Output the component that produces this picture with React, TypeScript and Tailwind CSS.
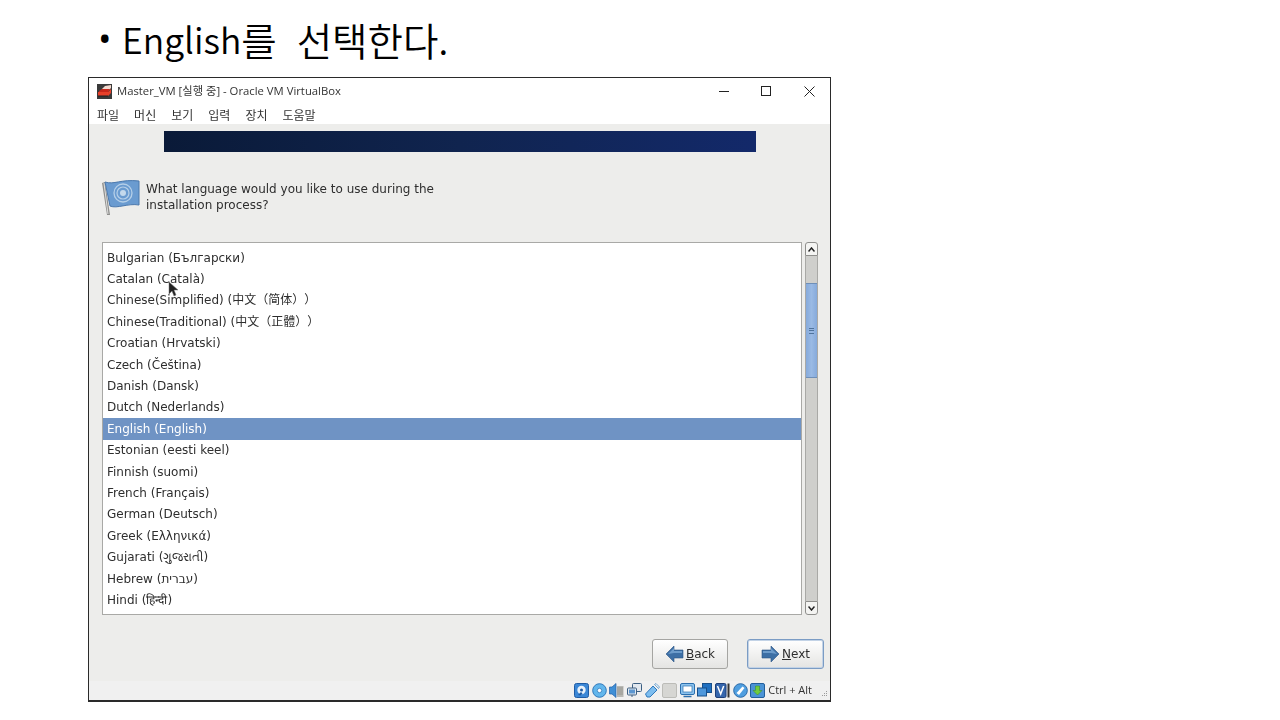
const languages = [
  'Bulgarian (Български)',
  'Catalan (Català)',
  'Chinese(Simplified) (中文（简体））',
  'Chinese(Traditional) (中文（正體））',
  'Croatian (Hrvatski)',
  'Czech (Čeština)',
  'Danish (Dansk)',
  'Dutch (Nederlands)',
  'English (English)',
  'Estonian (eesti keel)',
  'Finnish (suomi)',
  'French (Français)',
  'German (Deutsch)',
  'Greek (Ελληνικά)',
  'Gujarati (ગુજરાતી)',
  'Hebrew (עברית)',
  'Hindi (हिन्दी)',
]

const menus = ['파일', '머신', '보기', '입력', '장치', '도움말']

function VboxLogo() {
  return (
    <svg width="15" height="15" viewBox="0 0 15 15" aria-hidden="true">
      <rect width="15" height="15" fill="#3a3a3a" />
      <path d="M5 5l3-3 6-1v3l-3 3z" fill="#f3d9cf" />
      <path d="M2 7l3-2h8l-2 3H2z" fill="#c9261a" />
      <path d="M1 8h10l3-3v4l-3 3H1z" fill="#e8402a" />
      <path d="M1 12h10" stroke="#1f1f1f" strokeWidth="1" />
    </svg>
  )
}

function FlagIcon() {
  return (
    <svg width="38" height="37" viewBox="0 0 38 37" aria-hidden="true">
      <path d="M0 4l3-1 5 33-3 0z" fill="#8f8f8d" />
      <path d="M1.500 4l1 0 4 31-1 0z" fill="#e0e0de" />
      <path d="M3 3c9 3 16-3 34-1l0 24c-11-2-22 4-29 1z" fill="#6a9bd0" stroke="#4a78ad" />
      <circle cx="21" cy="14" r="9" fill="none" stroke="#b5cfe8" strokeWidth="1.300" />
      <circle cx="21" cy="14" r="6" fill="none" stroke="#b5cfe8" strokeWidth="1.200" />
      <circle cx="21" cy="14" r="3" fill="#c4d9ec" />
    </svg>
  )
}

function ArrowIcon({ left }: { left?: boolean }) {
  return (
    <svg width="19" height="18" viewBox="0 0 19 18" aria-hidden="true">
      <path
        d={left ? 'M1 9l8-8v4h9v8H9v4z' : 'M18 9l-8-8v4H1v8h9v4z'}
        fill="#3d6fa5"
        stroke="#2c5484"
        strokeWidth="0.600"
      />
      <path d={left ? 'M3 9l6-6v3h8v2H9z' : 'M16 9l-6-6v3H2v2h8z'} fill="#6d9ccb" />
    </svg>
  )
}

function StatusIcons() {
  return (
    <div className="flex items-center gap-[2.600px]">
      {/* hard disk */}
      <svg width="15" height="15" viewBox="0 0 15 15" aria-hidden="true">
        <rect x="0.500" y="0.500" width="14" height="14" rx="2" fill="#3b87d6" stroke="#1f5ca5" />
        <circle cx="7.500" cy="7" r="4.200" fill="#e8f1fa" />
        <circle cx="7.500" cy="7" r="1.500" fill="#1f5ca5" />
        <path d="M4 12l3-3 1.500 1.500-2 2z" fill="#1f5ca5" />
      </svg>
      {/* optical disc */}
      <svg width="15" height="15" viewBox="0 0 15 15" aria-hidden="true">
        <circle cx="7.500" cy="7.500" r="6.800" fill="#62b6ec" stroke="#2f78bb" />
        <circle cx="7.500" cy="7.500" r="2.200" fill="#fff" stroke="#2f78bb" strokeWidth="0.800" />
      </svg>
      {/* audio */}
      <svg width="15" height="15" viewBox="0 0 15 15" aria-hidden="true">
        <path d="M0.500 4h2.500l4-3.500v14l-4-3.500H0.500z" fill="#3f8fd6" stroke="#1f5ca5" strokeWidth="0.700" />
        <path d="M8 3h6.500v11H8z" fill="#b9b9b5" />
        <path d="M8 5h6M8 7h6M8 9h6M8 11h6" stroke="#87877f" strokeWidth="0.700" />
      </svg>
      {/* network */}
      <svg width="15" height="15" viewBox="0 0 15 15" aria-hidden="true">
        <rect x="5.500" y="0.500" width="9" height="8" rx="1" fill="#e2e8ef" stroke="#3c5f82" />
        <rect x="0.500" y="5" width="9" height="7" rx="1" fill="#e2e8ef" stroke="#3c5f82" />
        <rect x="2" y="6.500" width="6" height="4" fill="#5d97d1" />
        <path d="M5 12v2" stroke="#3c5f82" />
      </svg>
      {/* usb */}
      <svg width="15" height="15" viewBox="0 0 15 15" aria-hidden="true">
        <path d="M0.500 11l7.500-8 4 4-7 7H2z" fill="#7cbdf0" stroke="#2f78bb" />
        <path d="M9.500 1.500l1.500-1 3.500 3.500-1 1.500z" fill="#e5eef6" stroke="#2f78bb" strokeWidth="0.600" />
      </svg>
      {/* shared folders, inactive */}
      <svg width="15" height="15" viewBox="0 0 15 15" aria-hidden="true">
        <rect x="0.500" y="0.500" width="14" height="14" rx="1.500" fill="#d6d6d3" stroke="#bcbcb8" />
      </svg>
      {/* display */}
      <svg width="15" height="15" viewBox="0 0 15 15" aria-hidden="true">
        <rect x="0.500" y="0.500" width="14" height="11" rx="1.500" fill="#8cc3ee" stroke="#2b6fae" />
        <rect x="3" y="3" width="9" height="6" fill="#fff" stroke="#2b6fae" strokeWidth="0.700" />
        <path d="M3.500 13.500h8" stroke="#2b6fae" strokeWidth="1.500" />
      </svg>
      {/* seamless */}
      <svg width="15" height="15" viewBox="0 0 15 15" aria-hidden="true">
        <rect x="5.500" y="0.500" width="9" height="9" fill="#1f6fc0" stroke="#174f8a" />
        <rect x="0.500" y="5" width="9" height="8" fill="#4d97dc" stroke="#174f8a" />
      </svg>
      {/* vt-x */}
      <svg width="15" height="15" viewBox="0 0 15 15" aria-hidden="true">
        <rect x="0.500" y="0.500" width="10.500" height="14" rx="1.500" fill="#3566ad" stroke="#1d3f78" />
        <path d="M2.500 3L5.700 11l3-8" fill="none" stroke="#fff" strokeWidth="1.500" />
        <path d="M13.500 0.500v14" stroke="#333" strokeWidth="2" />
      </svg>
      {/* mouse */}
      <svg width="15" height="15" viewBox="0 0 15 15" aria-hidden="true">
        <circle cx="7.500" cy="7.500" r="6.800" fill="#4f9ee0" stroke="#2a6aa8" />
        <path d="M3.500 10l6-6.500 2 1.500-5.500 7z" fill="#fff" />
      </svg>
      {/* additions */}
      <svg width="15" height="15" viewBox="0 0 15 15" aria-hidden="true">
        <rect x="0.500" y="0.500" width="14" height="14" rx="1.500" fill="#4b93d6" stroke="#235f9c" />
        <path d="M7.500 12L3 7.500h2.500V3h4v4.500H12z" fill="#6fcb3e" stroke="#3c8a1d" strokeWidth="0.500" />
      </svg>
    </div>
  )
}

export default function App() {
  return (
    <div className="h-[720px] w-[1280px] overflow-hidden bg-white">
      <div className="flex h-[77px] items-start whitespace-pre pl-[98px] pt-[14px] font-['Noto_Sans_CJK_KR',sans-serif] font-[350] leading-[50px] text-black">
        <span className="w-[24px] font-['Open_Sans',sans-serif] text-[36px] font-normal">•</span>
        <span className="text-[35.500px]">English</span>
        <span className="text-[38.500px]">를</span>
        <span className="ml-[20px] text-[38.500px]">선택한다</span>
        <span className="text-[36px]">.</span>
      </div>

      <div className="relative ml-[88px] h-[625px] w-[743px] overflow-hidden border border-b-2 border-[#2a2a2a] bg-white font-['DejaVu_Sans','Noto_Sans_CJK_KR',sans-serif]">
        <div className="flex h-full flex-col blur-[0.300px]">
          {/* title bar */}
          <div className="flex h-[24px] items-center pl-[8px] pt-[2px]">
            <VboxLogo />
            <span className="ml-[5px] font-['Open_Sans','Noto_Sans_CJK_KR',sans-serif] text-[11.300px] text-[#333]">Master_VM [실행 중] - Oracle VM VirtualBox</span>
            <div className="ml-auto flex items-center pr-[15px]">
              <div className="h-px w-[10px] bg-[#222]" />
              <div className="ml-[32px] h-[10px] w-[10px] border border-[#222]" />
              <svg className="ml-[33px]" width="11" height="11" viewBox="0 0 11 11" aria-hidden="true">
                <path d="M0.500 0.500l10 10M10.500 0.500l-10 10" stroke="#222" strokeWidth="1" />
              </svg>
            </div>
          </div>

          {/* menu bar */}
          <div className="flex h-[22px] items-center gap-[15px] pl-[8px] pt-[3px] font-['Noto_Sans_CJK_KR',sans-serif] text-[12px] text-[#333]">
            {menus.map((m) => (
              <span key={m}>{m}</span>
            ))}
          </div>

          {/* guest screen */}
          <div className="flex flex-1 flex-col bg-[#ededeb] pl-[13px] pr-[12px] pt-[7px]">
            <div className="ml-[62px] h-[21px] w-[592px] bg-gradient-to-r from-[#0a1a38] via-[#10244f] to-[#13296a]" />

            <div className="mt-[27px] flex h-[37px] items-center">
              <FlagIcon />
              <p className="-mt-[2px] ml-[6px] w-[310px] text-[12px] leading-[16px] text-[#2e2e2e]">
                What language would you like to use during the installation process?
              </p>
            </div>

            <div className="mt-[26px] flex h-[373px]">
              <div className="flex w-[700px] flex-col border border-[#a9a9a6] bg-white pt-[4px]">
                {languages.map((l) => (
                  <div
                    key={l}
                    className={`flex h-[21.400px] shrink-0 items-center whitespace-pre pl-[4px] text-[12px] [text-spacing-trim:space-all] ${
                      l.startsWith('English') ? 'bg-[#6f93c4] text-white' : 'text-[#2e2e2e]'
                    }`}
                  >
                    {l}
                  </div>
                ))}
              </div>

              <div className="ml-[3px] flex w-[13px] flex-col">
                <div className="flex h-[14px] items-center justify-center rounded-t-[3px] border border-[#8f8f8c] bg-[#f4f4f2]">
                  <svg width="7" height="5" viewBox="0 0 7 5" aria-hidden="true">
                    <path d="M0.500 4.500L3.500 1l3 3.500" fill="none" stroke="#222" strokeWidth="1.500" />
                  </svg>
                </div>
                <div className="flex-1 border-x border-[#a9a9a6] bg-[#cfcfcc] pt-[27px]">
                  <div className="flex h-[95px] flex-col items-center justify-center gap-[1.500px] border-y border-[#6e8fb8] bg-gradient-to-r from-[#86aadb] via-[#9abae4] to-[#86aadb]">
                    <div className="h-px w-[5px] bg-[#4f739c]" />
                    <div className="h-px w-[5px] bg-[#4f739c]" />
                    <div className="h-px w-[5px] bg-[#4f739c]" />
                  </div>
                </div>
                <div className="flex h-[14px] items-center justify-center rounded-b-[3px] border border-[#8f8f8c] bg-[#f4f4f2]">
                  <svg width="7" height="5" viewBox="0 0 7 5" aria-hidden="true">
                    <path d="M0.500 0.500L3.500 4l3-3.500" fill="none" stroke="#222" strokeWidth="1.500" />
                  </svg>
                </div>
              </div>
            </div>

            <div className="mt-[24px] flex justify-end gap-[19px]">
              <button className="flex h-[30px] w-[76px] items-center justify-center gap-[2px] rounded-[3px] border border-[#a5a5a2] bg-gradient-to-b from-white to-[#e4e4e2] text-[12px] text-[#2e2e2e]">
                <ArrowIcon left />
                <span>
                  <span className="underline">B</span>ack
                </span>
              </button>
              <button className="-mr-[6px] flex h-[30px] w-[77px] items-center justify-center gap-[2px] rounded-[3px] border border-[#7b9cc4] bg-gradient-to-b from-white to-[#e4e4e2] text-[12px] text-[#2e2e2e] shadow-[inset_0_0_0_1px_#c3d3e6]">
                <ArrowIcon />
                <span>
                  <span className="underline">N</span>ext
                </span>
              </button>
            </div>
          </div>

          {/* status bar */}
          <div className="relative flex h-[19px] items-center justify-end bg-[#f0f0f0] pr-[18px]">
            <StatusIcons />
            <span className="ml-[3px] font-['Open_Sans',sans-serif] text-[11px] text-[#333]">Ctrl + Alt</span>
            {/* size grip */}
            <svg className="absolute bottom-[2px] right-[2px]" width="7" height="7" viewBox="0 0 7 7" aria-hidden="true">
              <path d="M5 0h1v1H5zM3 2h1v1H3zM5 2h1v1H5zM1 4h1v1H1zM3 4h1v1H3zM5 4h1v1H5z" fill="#9a9a9a" />
            </svg>
          </div>
        </div>

        {/* mouse pointer from the capture */}
        <svg className="absolute left-[79px] top-[203px]" width="11" height="17" viewBox="0 0 11 17" aria-hidden="true">
          <path d="M1 1v12l3-3 2 5 2-1-2-5h4z" fill="#222" stroke="#777" strokeWidth="0.500" />
        </svg>
      </div>
    </div>
  )
}
